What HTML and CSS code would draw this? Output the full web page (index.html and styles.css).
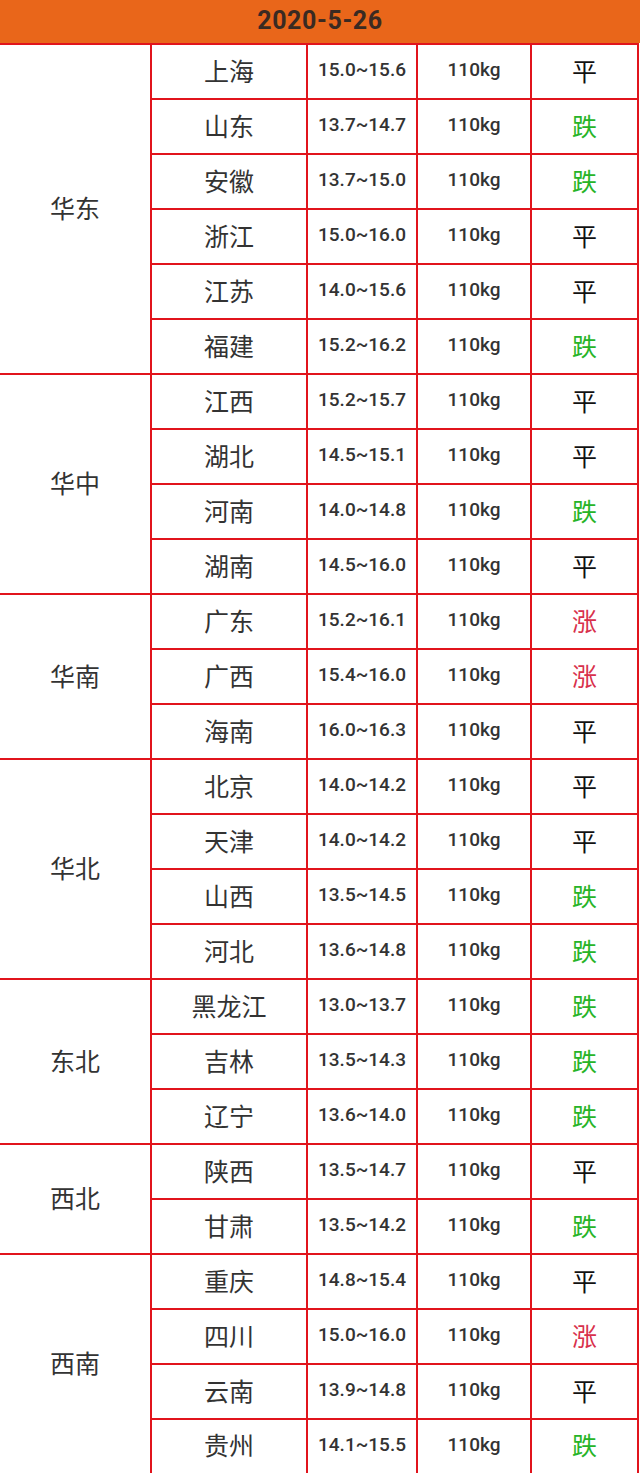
FILE: index.html
```html
<!DOCTYPE html>
<html lang="zh">
<head>
<meta charset="utf-8">
<link rel="stylesheet" href="styles.css">
</head>
<body>
<div class="sheet">
  <div class="title">2020-5-26</div>
  <table class="prices">
    <colgroup>
      <col class="c-region"><col class="c-prov"><col class="c-price"><col class="c-weight"><col class="c-trend">
    </colgroup>
    <tbody>
      <tr class="grp"><td class="region" rowspan="6">华东</td><td class="prov">上海</td><td class="price">15.0~15.6</td><td class="weight">110kg</td><td class="trend flat">平</td></tr>
      <tr><td class="prov">山东</td><td class="price">13.7~14.7</td><td class="weight">110kg</td><td class="trend down">跌</td></tr>
      <tr><td class="prov">安徽</td><td class="price">13.7~15.0</td><td class="weight">110kg</td><td class="trend down">跌</td></tr>
      <tr><td class="prov">浙江</td><td class="price">15.0~16.0</td><td class="weight">110kg</td><td class="trend flat">平</td></tr>
      <tr><td class="prov">江苏</td><td class="price">14.0~15.6</td><td class="weight">110kg</td><td class="trend flat">平</td></tr>
      <tr><td class="prov">福建</td><td class="price">15.2~16.2</td><td class="weight">110kg</td><td class="trend down">跌</td></tr>

      <tr class="grp"><td class="region" rowspan="4">华中</td><td class="prov">江西</td><td class="price">15.2~15.7</td><td class="weight">110kg</td><td class="trend flat">平</td></tr>
      <tr><td class="prov">湖北</td><td class="price">14.5~15.1</td><td class="weight">110kg</td><td class="trend flat">平</td></tr>
      <tr><td class="prov">河南</td><td class="price">14.0~14.8</td><td class="weight">110kg</td><td class="trend down">跌</td></tr>
      <tr><td class="prov">湖南</td><td class="price">14.5~16.0</td><td class="weight">110kg</td><td class="trend flat">平</td></tr>

      <tr class="grp"><td class="region" rowspan="3">华南</td><td class="prov">广东</td><td class="price">15.2~16.1</td><td class="weight">110kg</td><td class="trend up">涨</td></tr>
      <tr><td class="prov">广西</td><td class="price">15.4~16.0</td><td class="weight">110kg</td><td class="trend up">涨</td></tr>
      <tr><td class="prov">海南</td><td class="price">16.0~16.3</td><td class="weight">110kg</td><td class="trend flat">平</td></tr>

      <tr class="grp"><td class="region" rowspan="4">华北</td><td class="prov">北京</td><td class="price">14.0~14.2</td><td class="weight">110kg</td><td class="trend flat">平</td></tr>
      <tr><td class="prov">天津</td><td class="price">14.0~14.2</td><td class="weight">110kg</td><td class="trend flat">平</td></tr>
      <tr><td class="prov">山西</td><td class="price">13.5~14.5</td><td class="weight">110kg</td><td class="trend down">跌</td></tr>
      <tr><td class="prov">河北</td><td class="price">13.6~14.8</td><td class="weight">110kg</td><td class="trend down">跌</td></tr>

      <tr class="grp"><td class="region" rowspan="3">东北</td><td class="prov">黑龙江</td><td class="price">13.0~13.7</td><td class="weight">110kg</td><td class="trend down">跌</td></tr>
      <tr><td class="prov">吉林</td><td class="price">13.5~14.3</td><td class="weight">110kg</td><td class="trend down">跌</td></tr>
      <tr><td class="prov">辽宁</td><td class="price">13.6~14.0</td><td class="weight">110kg</td><td class="trend down">跌</td></tr>

      <tr class="grp"><td class="region" rowspan="2">西北</td><td class="prov">陕西</td><td class="price">13.5~14.7</td><td class="weight">110kg</td><td class="trend flat">平</td></tr>
      <tr><td class="prov">甘肃</td><td class="price">13.5~14.2</td><td class="weight">110kg</td><td class="trend down">跌</td></tr>

      <tr class="grp"><td class="region" rowspan="4">西南</td><td class="prov">重庆</td><td class="price">14.8~15.4</td><td class="weight">110kg</td><td class="trend flat">平</td></tr>
      <tr><td class="prov">四川</td><td class="price">15.0~16.0</td><td class="weight">110kg</td><td class="trend up">涨</td></tr>
      <tr><td class="prov">云南</td><td class="price">13.9~14.8</td><td class="weight">110kg</td><td class="trend flat">平</td></tr>
      <tr><td class="prov">贵州</td><td class="price">14.1~15.5</td><td class="weight">110kg</td><td class="trend down">跌</td></tr>
    </tbody>
  </table>
</div>
</body>
</html>
```

FILE: styles.css
```css
html, body {
  margin: 0;
  padding: 0;
  background: #ffffff;
}

.sheet {
  width: 640px;
}

.title {
  height: 43px;
  background: #e9661a;
  color: #3a2a22;
  font-family: Roboto, "Liberation Sans", sans-serif;
  font-weight: 700;
  font-size: 25px;
  line-height: 41px;
  text-align: center;
  letter-spacing: 0.6px;
}

.prices {
  width: 638px;
  border-collapse: collapse;
  table-layout: fixed;
  border-top: 2px solid #e1141c;
  border-bottom: 3px solid #e1141c;
}

.c-region { width: 151px; }
.c-prov { width: 156px; }
.c-price { width: 110px; }
.c-weight { width: 114px; }
.c-trend { width: 107px; }

.prices tr {
  height: 55px;
}

.prices td {
  border: 2px solid #e1141c;
  padding: 0 0 4px 0;
  text-align: center;
  vertical-align: middle;
  color: #333333;
}

.prices td.region {
  border-left: none;
  font-family: "Noto Sans CJK SC", sans-serif;
  font-size: 25px;
}

.prov {
  font-family: "Noto Sans CJK SC", sans-serif;
  font-size: 25px;
}

.price, .weight {
  font-family: Roboto, "Liberation Sans", sans-serif;
  font-weight: 500;
  font-size: 19px;
}

.trend {
  font-family: "Noto Sans CJK SC", sans-serif;
  font-size: 25px;
}

.prices td.flat { color: #111111; }
.prices td.down { color: #27b427; }
.prices td.up { color: #d8304c; }
```
